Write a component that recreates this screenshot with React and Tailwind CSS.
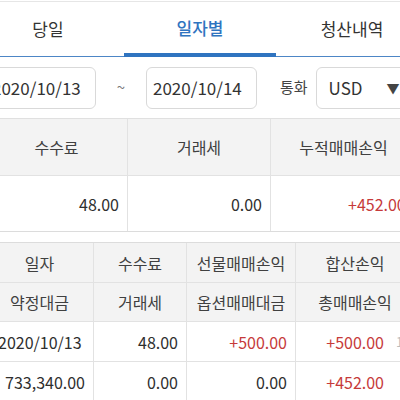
import React from 'react'

const font = { fontFamily: '"Noto Sans CJK KR", "Noto Sans", sans-serif' }

const tabs = [
  { label: '당일', active: false },
  { label: '일자별', active: true },
  { label: '청산내역', active: false },
]

function Cell({ w, children, head, align = 'right', red, last }) {
  return (
    <div
      className={`${w} shrink-0 h-full flex items-center px-[8px] whitespace-nowrap ${last ? '' : 'border-r'} border-[#e2e2e2] ${
        align === 'center' ? 'justify-center' : align === 'left' ? 'justify-start' : 'justify-end'
      } ${red ? 'text-[#c63a3a]' : head ? 'text-[#404040]' : 'text-[#2e2e2e]'}`}
    >
      {children}
    </div>
  )
}

export default function App() {
  const cols = ['w-[108px]', 'w-[93px]', 'w-[109px]', 'w-[118px]']

  return (
    <div className="w-[400px] h-[400px] overflow-hidden bg-white" style={font}>
      {/* top edge */}
      <div className="h-[2px] border-b border-[#e6e6e6]" />

      {/* Tabs */}
      <div className="h-[55px] w-[456px] ml-[-28px] flex">
        {tabs.map(t => (
          <div
            key={t.label}
            className={`w-[152px] shrink-0 flex items-center justify-center text-[17px] ${
              t.active
                ? 'border-b-[4px] border-[#2f74c0] text-[#2f74c0] font-medium'
                : 'border-b border-[#4d86c6] text-[#333]'
            }`}
          >
            {t.label}
          </div>
        ))}
      </div>

      {/* Filters */}
      <div className="h-[62px] flex items-center border-b border-[#e0e0e0] ml-[-16px] w-[440px]">
        <div className="w-[112px] shrink-0 h-[42px] border border-[#d9d9d9] rounded-[6px] flex items-center pl-[7px] text-[17px] text-[#333]">
          2020/10/13
        </div>
        <div className="w-[50px] shrink-0 text-center text-[#777] text-[15px]">~</div>
        <div className="w-[111px] shrink-0 h-[42px] border border-[#d9d9d9] rounded-[6px] flex items-center pl-[6px] text-[17px] text-[#333]">
          2020/10/14
        </div>
        <div className="ml-[23px] shrink-0 whitespace-nowrap text-[15px] text-[#444]">통화</div>
        <div className="ml-[8px] w-[110px] shrink-0 h-[42px] border border-[#d9d9d9] rounded-[6px] flex items-center pl-[12px] text-[17px] text-[#333] whitespace-nowrap">
          USD
          <span className="ml-[24px] text-[13px] text-[#444]">▼</span>
        </div>
      </div>

      {/* Summary */}
      <div className="ml-[-14px] w-[430px] text-[16px]">
        <div className="h-[57px] flex bg-[#f3f3f3] border-b border-[#e2e2e2]">
          <Cell w="w-[142px]" head align="center">수수료</Cell>
          <Cell w="w-[143px]" head align="center">거래세</Cell>
          <Cell w="w-[145px]" head align="center" last>누적매매손익</Cell>
        </div>
        <div className="h-[56px] flex border-b border-[#dcdcdc]">
          <Cell w="w-[142px]">48.00</Cell>
          <Cell w="w-[143px]">0.00</Cell>
          <div className="w-[145px] shrink-0 h-full flex items-center pl-[77px] text-[#c63a3a] whitespace-nowrap">+452.00</div>
        </div>
      </div>

      <div className="h-[10px]" />

      {/* Daily table */}
      <div className="ml-[-14px] w-[440px] text-[16px] border-t border-[#dcdcdc]">
        <div className="h-[40px] flex bg-[#f3f3f3] border-b border-[#e2e2e2]">
          <Cell w={cols[0]} head align="center">일자</Cell>
          <Cell w={cols[1]} head align="center">수수료</Cell>
          <Cell w={cols[2]} head align="center">선물매매손익</Cell>
          <Cell w={cols[3]} head align="center" last>합산손익</Cell>
        </div>
        <div className="h-[39px] flex bg-[#f3f3f3] border-b border-[#e2e2e2]">
          <Cell w={cols[0]} head align="center">약정대금</Cell>
          <Cell w={cols[1]} head align="center">거래세</Cell>
          <Cell w={cols[2]} head align="center">옵션매매대금</Cell>
          <Cell w={cols[3]} head align="center" last>총매매손익</Cell>
        </div>
        <div className="h-[40px] flex border-b border-[#e2e2e2]">
          <Cell w={cols[0]} align="left">
            <span className="ml-[4px]">2020/10/13</span>
          </Cell>
          <Cell w={cols[1]}>48.00</Cell>
          <Cell w={cols[2]} red>+500.00</Cell>
          <div className="w-[118px] shrink-0 h-full flex items-center text-[#c63a3a] whitespace-nowrap">
            <span className="w-[96px] shrink-0 text-right pr-[8px]">+500.00</span>
            <span className="ml-[4px] text-[#bbb] text-[13px]">1</span>
          </div>
        </div>
        <div className="h-[40px] flex border-b border-[#e2e2e2]">
          <Cell w={cols[0]}>733,340.00</Cell>
          <Cell w={cols[1]}>0.00</Cell>
          <Cell w={cols[2]}>0.00</Cell>
          <div className="w-[118px] shrink-0 h-full flex items-center text-[#c63a3a] whitespace-nowrap">
            <span className="w-[96px] shrink-0 text-right pr-[8px]">+452.00</span>
          </div>
        </div>
      </div>
    </div>
  )
}
